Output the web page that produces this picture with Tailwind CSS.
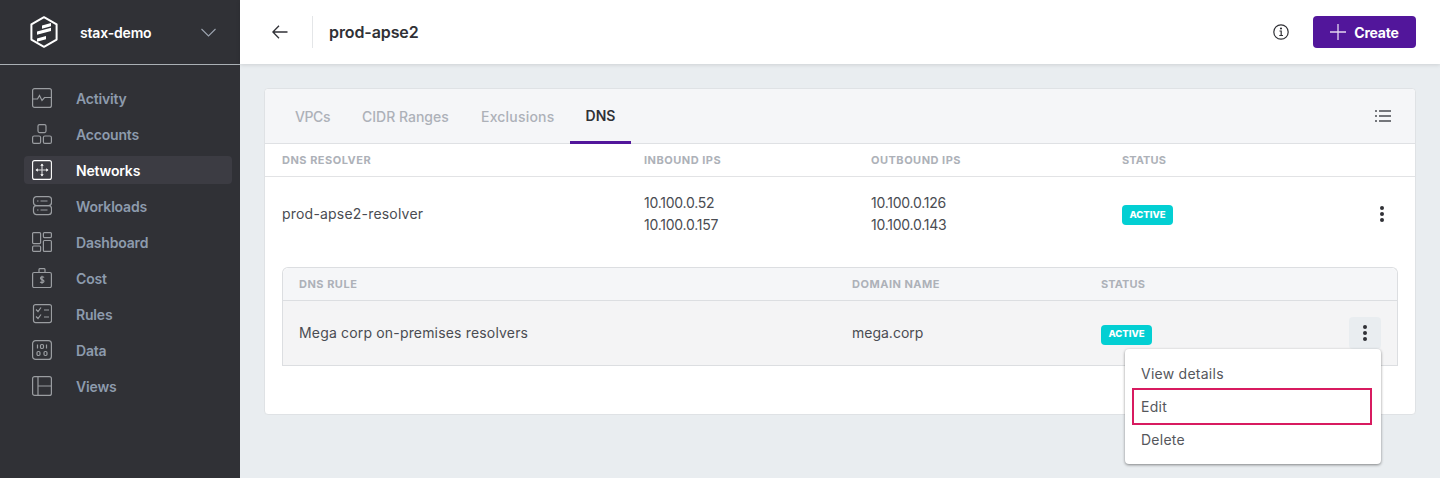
<!DOCTYPE html>
<html lang="en">
<head>
    <meta charset="UTF-8">
    <title>prod-apse2</title>
    <script src="https://cdn.jsdelivr.net/npm/@tailwindcss/browser@4"></script>
</head>
<body class="bg-[#e9edf0] font-['Inter',sans-serif] overflow-hidden">
<div class="flex h-[478px] w-[1440px]">
    <!-- Sidebar -->
    <aside class="w-[240px] shrink-0 bg-[#303136]">
        <div class="h-[65px] border-b border-[#aab0b5] flex items-center pl-[30px] pr-[24px]">
            <svg width="28" height="32" viewBox="0 0 28 32" fill="none"><path d="M14 1.200 26.600 8.400V23.600L14 30.800 1.400 23.600V8.400Z" stroke="#fff" stroke-width="2" stroke-linejoin="round"/><path d="M12 10.500 21 8V11.200L12 13.700ZM7 16.500 21 12.800V16L7 19.700ZM7 23.500 16 21V24.200L7 26.700Z" fill="#fff" transform="translate(0 -1)"/></svg>
            <span class="ml-[22px] text-[14px] font-semibold text-white tracking-[-0.18px]">stax-demo</span>
            <svg class="ml-auto" width="15" height="9" viewBox="0 0 15 9" fill="none"><path d="M.5 1 7.500 8 14.500 1" stroke="#9ca3af" stroke-width="1.100"/></svg>
        </div>
        <nav class="pt-[15px] pl-[24px] pr-[8px] text-[14px] font-semibold text-[#8d9bad] tracking-[-0.18px]">
            <div class="flex items-center h-[36px] pl-[8px]">
                <svg width="20" height="20" viewBox="0 0 20 20" fill="none" stroke="#9a9da1" stroke-width="1.200"><rect x="0.600" y="0.600" width="18.800" height="18.800" rx="2"/><path d="M1 11H5.500L7.500 7.500 10 12.500 12.500 9.500H19"/></svg>
                <span class="ml-[24px]">Activity</span>
            </div>
            <div class="flex items-center h-[36px] pl-[8px]">
                <svg width="20" height="20" viewBox="0 0 20 20" fill="none" stroke="#9a9da1" stroke-width="1.200"><rect x="6" y="0.600" width="8" height="8" rx="1.500"/><rect x="0.600" y="12" width="8" height="7.400" rx="1.500"/><rect x="11.400" y="12" width="8" height="7.400" rx="1.500"/></svg>
                <span class="ml-[24px]">Accounts</span>
            </div>
            <div class="flex items-center h-[28px] my-[4px] pl-[8px] rounded-[4px] bg-[#3c3c43] text-white">
                <svg width="20" height="20" viewBox="0 0 20 20" fill="none" stroke="#fff" stroke-width="1.100"><rect x="0.600" y="0.600" width="18.800" height="18.800" rx="2"/><path d="M10 4.500V15.500M4.500 10H15.500" stroke="#d8d8da"/><path d="M10 3.500 11.700 5.800H8.300ZM10 16.500 11.700 14.200H8.300ZM3.500 10 5.800 8.300V11.700ZM16.500 10 14.200 8.300V11.700Z" fill="#fff" stroke="none"/></svg>
                <span class="ml-[24px]">Networks</span>
            </div>
            <div class="flex items-center h-[36px] pl-[8px]">
                <svg width="20" height="20" viewBox="0 0 20 20" fill="none" stroke="#9a9da1" stroke-width="1.200"><rect x="1.500" y="0.600" width="18" height="9" rx="3"/><rect x="1.500" y="9.600" width="18" height="9" rx="3"/><path d="M5 5H6.500M8.500 5H15.500M5 14H6.500M8.500 14H15.500"/></svg>
                <span class="ml-[24px]">Workloads</span>
            </div>
            <div class="flex items-center h-[36px] pl-[8px]">
                <svg width="20" height="20" viewBox="0 0 20 20" fill="none" stroke="#9a9da1" stroke-width="1.200"><rect x="0.600" y="0.600" width="8" height="11" rx="1"/><rect x="11.400" y="0.600" width="8" height="5" rx="1"/><rect x="0.600" y="14" width="8" height="5.400" rx="1"/><rect x="11.400" y="8.500" width="8" height="10.900" rx="1"/></svg>
                <span class="ml-[24px]">Dashboard</span>
            </div>
            <div class="flex items-center h-[36px] pl-[8px]">
                <svg width="20" height="20" viewBox="0 0 20 20" fill="none" stroke="#9a9da1" stroke-width="1.200"><rect x="0.600" y="4.500" width="18.800" height="15" rx="1.500"/><path d="M7 4.500V1.500A1 1 0 0 1 8 .6H12A1 1 0 0 1 13 1.500V4.500"/><path d="M12 9.500C11.500 8.500 8.500 8.300 8.500 10.200 8.500 12 12 11.300 12 13.300 12 15 9 15 8.200 13.800M10 7.800V15.800"/></svg>
                <span class="ml-[24px]">Cost</span>
            </div>
            <div class="flex items-center h-[36px] pl-[8px]">
                <svg width="20" height="20" viewBox="0 0 20 20" fill="none" stroke="#9a9da1" stroke-width="1.200"><rect x="1.500" y="0.600" width="18" height="18" rx="2"/><path d="M4 5.500 6 7.500 9 3.500M12 6H17M4 12.500 6 14.500 9 10.500M12 13H17"/></svg>
                <span class="ml-[24px]">Rules</span>
            </div>
            <div class="flex items-center h-[36px] pl-[8px]">
                <svg width="20" height="20" viewBox="0 0 20 20" fill="none" stroke="#9a9da1" stroke-width="1.200"><rect x="0.600" y="0.600" width="18.800" height="18.800" rx="3"/><path d="M5.500 4.500V8.500M14.500 4.500V8.500"/><rect x="8.500" y="4.500" width="3" height="4" rx="1.200"/><rect x="5" y="11.500" width="3" height="4" rx="1.200"/><rect x="12" y="11.500" width="3" height="4" rx="1.200"/></svg>
                <span class="ml-[24px]">Data</span>
            </div>
            <div class="flex items-center h-[36px] pl-[8px]">
                <svg width="20" height="20" viewBox="0 0 20 20" fill="none" stroke="#9a9da1" stroke-width="1.200"><rect x="0.600" y="0.600" width="18.800" height="18.800" rx="2"/><path d="M6 .6V19.400M6 10H19.400"/></svg>
                <span class="ml-[24px]">Views</span>
            </div>
        </nav>
    </aside>

    <!-- Main -->
    <main class="flex-1 flex flex-col min-w-0">
        <header class="h-[64px] bg-white shadow-[0_1px_4px_rgba(0,0,0,0.12)] flex items-center pl-[32px] pr-[24px] relative">
            <svg width="16" height="14" viewBox="0 0 16 14" fill="none" stroke="#303136" stroke-width="1.300"><path d="M15.500 7H1M7 .8 .9 7 7 13.200"/></svg>
            <div class="w-px h-[32px] bg-[#e4e6e8] ml-[24px]"></div>
            <h1 class="ml-[16px] text-[16px] font-semibold text-[#303136] tracking-[-0.1px]">prod-apse2</h1>
            <svg class="ml-auto" width="16" height="16" viewBox="0 0 16 16" fill="none" stroke="#303136" stroke-width="1.200"><circle cx="8" cy="8" r="7.200"/><path d="M6.500 7H8.200V11.500M6.300 11.500H10"/><circle cx="8" cy="4.500" r=".5"/></svg>
            <button class="ml-[24px] w-[103px] h-[32px] rounded-[4px] bg-[#52169b] text-white text-[14px] font-bold flex items-center justify-center gap-[8px] tracking-[-0.2px]">
                <svg width="16" height="16" viewBox="0 0 16 16" fill="none" stroke="#e3d6f0" stroke-width="1.300"><path d="M8 0V16M0 8H16"/></svg>
                Create
            </button>
        </header>

        <div class="pt-[24px] px-[24px]">
            <section class="relative h-[327px] rounded-[4px] border border-[#dfe2e5] bg-white">
                <div class="h-[55px] rounded-t-[4px] bg-[#f5f6f8] border-b border-[#dfe1e4] flex items-end pl-[14px] pr-[24px] text-[14px] font-medium text-[#adb1b8]">
                    <div class="h-[54px] w-[67px] pl-[16px] flex items-center tracking-[-0.4px]">VPCs</div>
                    <div class="h-[54px] w-[119px] pl-[16px] flex items-center">CIDR Ranges</div>
                    <div class="h-[54px] w-[105px] pl-[16px] flex items-center tracking-[0.2px]">Exclusions</div>
                    <div class="h-[54px] w-[61px] flex items-center justify-center border-b-[3px] border-[#52169b] text-[#303136] font-semibold mb-[-1px]">DNS</div>
                    <svg class="ml-auto self-center" width="16" height="12" viewBox="0 0 16 12" fill="none" stroke="#4a4c52" stroke-width="1.500"><path d="M4 1H16M4 6H16M4 11H16M0 1H2M0 6H2M0 11H2"/></svg>
                </div>
                <div class="h-[33px] border-b border-[#e2e3e5] flex items-center pl-[17px] text-[11px] font-bold text-[#adb1b8] tracking-[0.5px]">
                    <div class="w-[362px]">DNS RESOLVER</div>
                    <div class="w-[227px]">INBOUND IPS</div>
                    <div class="w-[251px]">OUTBOUND IPS</div>
                    <div class="tracking-[0.1px]">STATUS</div>
                </div>
                <div class="h-[73px] flex items-center pl-[17px] text-[14px] text-[#4a4c52]">
                    <div class="w-[362px] tracking-[0.2px]">prod-apse2-resolver</div>
                    <div class="w-[227px] leading-[22px] tracking-[-0.25px]">10.100.0.52<br>10.100.0.157</div>
                    <div class="w-[251px] leading-[22px] tracking-[-0.25px]">10.100.0.126<br>10.100.0.143</div>
                    <div class="w-[258px]"><span class="inline-flex items-center justify-center w-[51px] h-[20px] rounded-[4px] bg-[#03cfd3] text-white text-[9.500px] font-extrabold">ACTIVE</span></div>
                    <svg width="4" height="16" viewBox="0 0 4 16" fill="#303136"><circle cx="2" cy="2" r="2"/><circle cx="2" cy="8" r="2"/><circle cx="2" cy="14" r="2"/></svg>
                </div>
                <div class="mx-[17px] mt-[17px] border border-b-0 border-[#dcdee1] rounded-t-[6px]">
                    <div class="h-[33px] rounded-t-[6px] bg-[#f5f6f8] border-b border-[#dcdee1] flex items-center pl-[16px] text-[11px] font-bold text-[#adb1b8] tracking-[0.5px]">
                        <div class="w-[553px]">DNS RULE</div>
                        <div class="w-[249px]">DOMAIN NAME</div>
                        <div class="tracking-[0.1px]">STATUS</div>
                    </div>
                    <div class="h-[65px] bg-[#f4f4f5] border-b border-[#dcdee1] flex items-center px-[16px] text-[14px] text-[#4a4c52]">
                        <div class="w-[553px] mt-[-2px] tracking-[0.17px]">Mega corp on-premises resolvers</div>
                        <div class="w-[249px] mt-[-2px]">mega.corp</div>
                        <div class="w-[248px]"><span class="inline-flex items-center justify-center w-[51px] h-[20px] rounded-[4px] bg-[#03cfd3] text-white text-[9.500px] font-extrabold">ACTIVE</span></div>
                        <button class="w-[32px] h-[32px] rounded-[4px] bg-[#e9edf0] flex items-center justify-center">
                            <svg width="4" height="16" viewBox="0 0 4 16" fill="#303136"><circle cx="2" cy="2" r="2"/><circle cx="2" cy="8" r="2"/><circle cx="2" cy="14" r="2"/></svg>
                        </button>
                    </div>
                </div>
                <!-- Row menu -->
                <div class="absolute left-[860px] top-[260px] w-[256px] h-[115px] rounded-[4px] bg-white shadow-[0_1px_3px_rgba(0,0,0,0.45)] pt-[8px] text-[14px] text-[#55575c] tracking-[0.25px]">
                    <div class="h-[33px] flex items-center pl-[16px]">View details</div>
                    <div class="h-[37px] ml-[7px] mr-[9px] mt-[-2px] flex items-center pl-[7px] border-2 border-[#d81b60]">Edit</div>
                    <div class="h-[28px] flex items-center pl-[16px]">Delete</div>
                </div>
            </section>
        </div>
    </main>
</div>
</body>
</html>
